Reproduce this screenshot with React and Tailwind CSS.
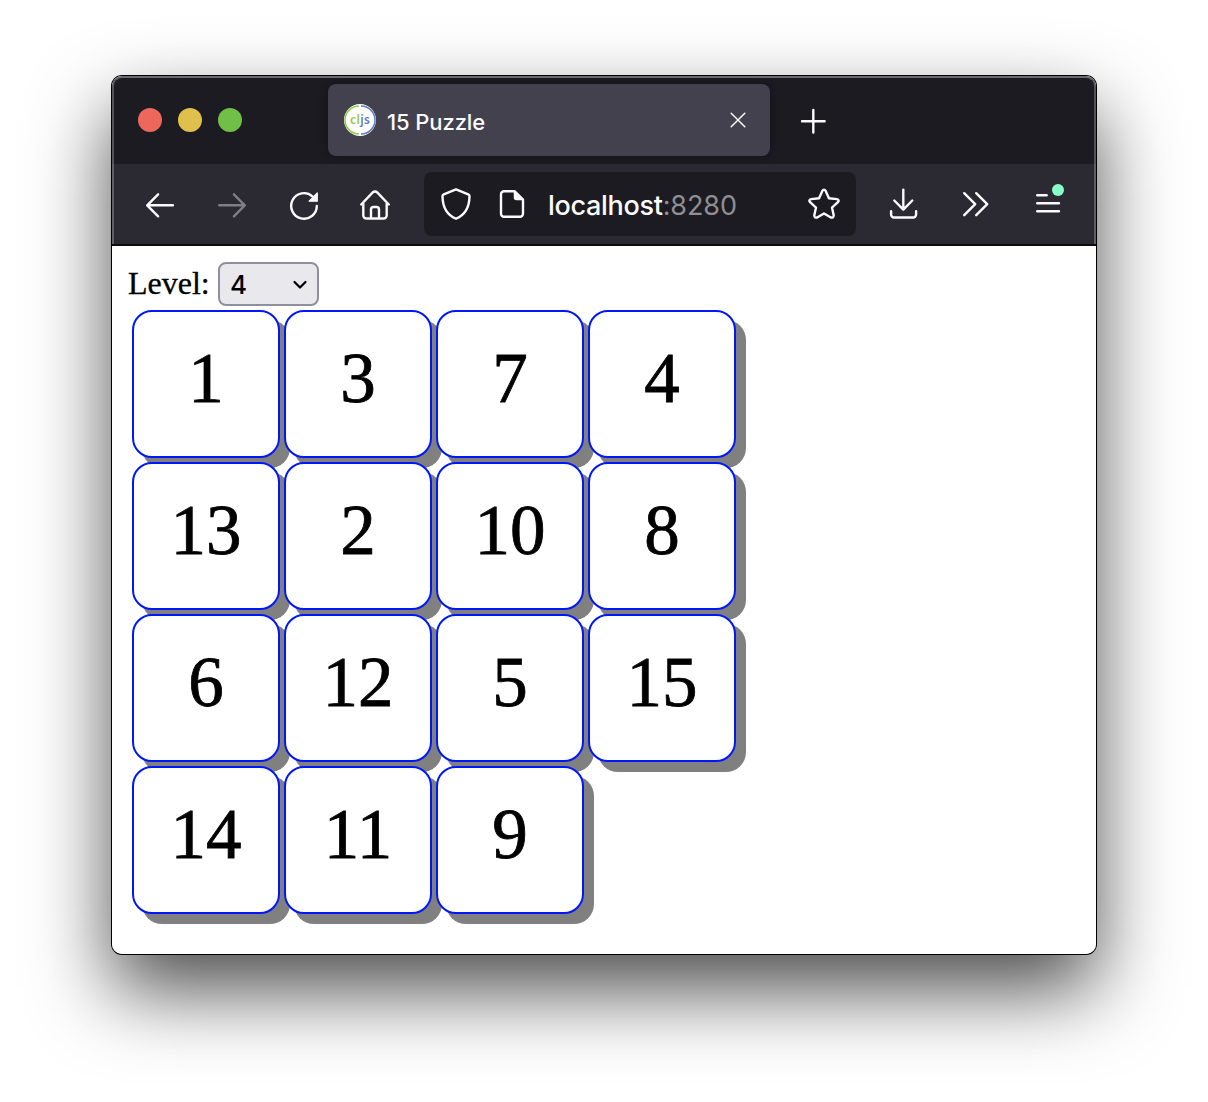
const TILES = [1, 3, 7, 4, 13, 2, 10, 8, 6, 12, 5, 15, 14, 11, 9];

function Icon({ children, className = "text-[#fbfbfe]" }) {
  return (
    <svg
      viewBox="0 0 32 32"
      fill="none"
      stroke="currentColor"
      strokeWidth="2.4"
      strokeLinecap="round"
      strokeLinejoin="round"
      className={`size-8 shrink-0 ${className}`}
    >
      {children}
    </svg>
  );
}

function Favicon() {
  return (
    <svg viewBox="0 0 32 32" className="size-8 shrink-0">
      <circle cx="16" cy="16" r="16" fill="#fff" />
      <path d="M15 2a14 14 0 0 0 0 28" fill="none" stroke="#96ca4b" strokeWidth="1.5" />
      <path d="M17 2a14 14 0 0 1 0 28" fill="none" stroke="#5f7fbf" strokeWidth="1.5" />
      <text x="6" y="20" fontFamily="'Noto Sans', sans-serif" fontSize="12" fontWeight="600" textLength="20">
        <tspan fill="#96ca4b">cl</tspan>
        <tspan fill="#5f7fbf">js</tspan>
      </text>
    </svg>
  );
}

function TabBar() {
  return (
    <div className="flex h-[88px] items-start bg-[#1c1b22] pt-2">
      <div className="ml-[26px] mt-6 flex w-[190px] gap-4">
        <span className="size-6 rounded-full bg-[#ee675c]" />
        <span className="size-6 rounded-full bg-[#e0c04c]" />
        <span className="size-6 rounded-full bg-[#71bf46]" />
      </div>
      <div className="flex h-[72px] w-[442px] items-center rounded-lg bg-[#42414d] pl-4 pr-4 shadow-[0_0_8px_rgba(0,0,0,0.4)]">
        <Favicon />
        <span className="ml-[11px] mt-1 flex-1 font-['Inter',sans-serif] text-[22px] font-medium leading-7 tracking-[-0.1px] text-[#fbfbfe]">
          15 Puzzle
        </span>
        <Icon>
          <path d="M9.200 9.200l13.600 13.600M22.800 9.200L9.200 22.800" strokeWidth="1.500" />
        </Icon>
      </div>
      <div className="ml-[27px] mt-[21px]">
        <Icon>
          <path d="M16.300 5v22.600M5 16.300h22.600" />
        </Icon>
      </div>
    </div>
  );
}

function UrlBar() {
  return (
    <div className="-mx-2 flex h-16 w-[432px] shrink-0 items-center rounded-lg bg-[#1c1b22] px-4">
      <Icon>
        <path d="M16 1.400L28.200 6.300Q29.600 7 29.500 8.500C29.300 18 26 26.600 16 30.700C6 26.600 2.700 18 2.500 8.500Q2.400 7 3.800 6.300Z" />
      </Icon>
      <Icon className="ml-6 text-[#fbfbfe]">
        <path d="M18.500 3.200H8a3 3 0 0 0-3 3v19.600a3 3 0 0 0 3 3h16a3 3 0 0 0 3-3V11.500Z" />
        <path d="M18.500 3.200v6.300a2 2 0 0 0 2 2H27Z" fill="currentColor" strokeWidth="1.500" />
      </Icon>
      <span className="ml-5 mt-1 flex-1 font-['Inter',sans-serif] text-[27px] leading-8 tracking-[-0.1px] text-[#fbfbfe]">
        <span className="font-medium tracking-[-0.3px]">localhost</span>
        <span className="text-[#8f8e94]">:8280</span>
      </span>
      <Icon>
        <path d="M14.300 2.900Q16 .4 17.700 2.900L20.900 10.200L28.900 11.100Q31.800 11.900 29.900 14.200L24 19.600L25.700 27.300Q25.600 30.300 22.900 29.500L16 25.500L9.100 29.500Q6.400 30.300 6.300 27.300L8 19.600L2.100 14.200Q.2 11.900 3.100 11.100L11.100 10.200Z" />
      </Icon>
    </div>
  );
}

function Toolbar() {
  return (
    <div className="flex h-[82px] items-center gap-10 border-b-2 border-[#0c0c0d] bg-[#2b2a33] pl-8">
      <Icon>
        <path d="M28.900 17.300H3.400M14.100 6.300L3.200 17.300l10.900 11" />
      </Icon>
      <Icon className="text-[#7f7e84]">
        <path d="M3.200 17.300h25.600M17.900 6.300l10.900 11l-10.900 11" />
      </Icon>
      <Icon>
        <path d="M28.800 18a12.800 12.800 0 1 1-4.400-9.700" />
        <path d="M29.300 5v8.200h-8.200Z" fill="currentColor" strokeWidth="1.200" />
      </Icon>
      <Icon className="-ml-px mr-px text-[#fbfbfe]">
        <path d="M2.200 16.500L13.800 4.400a3 3 0 0 1 4.400 0L29.800 16.500M4.300 14.500v13a3 3 0 0 0 3 3h17.400a3 3 0 0 0 3-3v-13M12 30v-8.500a2.500 2.500 0 0 1 2.500-2.500h3a2.500 2.500 0 0 1 2.500 2.500V30" />
      </Icon>
      <UrlBar />
      <Icon>
        <path d="M15.300 1.600v20M6.300 12.500l9 9.200l9-9.200M3.100 23.300v3.200a3 3 0 0 0 3 3h19a3 3 0 0 0 3-3v-3.200" />
      </Icon>
      <Icon>
        <path d="M4.200 5.200l11 11l-11 11M16.200 5.200l11 11l-11 11" />
      </Icon>
      <div className="relative size-8 shrink-0">
        <Icon>
          <path d="M5.200 7.200h9.500M5.200 15.200h21.800M5.200 23.200h21.800" />
        </Icon>
        <span className="absolute -top-1 left-5 size-3 rounded-full bg-[#87ffc4]" />
      </div>
    </div>
  );
}

function Tile({ value }) {
  return (
    <div className="size-[148px] rounded-[20px] border-2 border-[#0018f9] bg-white pt-[26px] text-center text-[71px] leading-[80px] shadow-[10px_10px_0_#808080] [-webkit-text-stroke:0.8px_#000]">
      {value}
    </div>
  );
}

export default function App() {
  return (
    <div className="h-[1102px] w-[1208px] overflow-hidden bg-white pl-[112px] pt-[76px]">
      <div className="relative h-[878px] w-[984px] rounded-[10px] shadow-[0_0_0_1px_#000,0_36px_80px_rgba(0,0,0,0.7)]">
        <div className="h-full overflow-hidden rounded-[10px] bg-white">
          <TabBar />
          <Toolbar />
          <main className="px-4 pt-4 font-['Liberation_Serif',serif] text-black">
            <div className="flex h-11 items-center">
              <span className="-mt-0.5 w-[90px] text-[32px] leading-9 [-webkit-text-stroke:0.3px_#000]">Level:</span>
              <div className="flex h-11 w-[101px] items-center justify-between rounded-lg border-2 border-[#8f8f9d] bg-[#e9e9ed] pl-2.5 pr-[9px] font-['Inter',sans-serif] text-[26px] font-medium leading-8">
                <span className="mt-0.5">4</span>
                <svg viewBox="0 0 16 12" className="h-3 w-4" fill="none" stroke="#000" strokeWidth="2.200" strokeLinecap="round" strokeLinejoin="round">
                  <path d="M2.500 4l5.500 5.500l5.500-5.500" />
                </svg>
              </div>
            </div>
            <div className="ml-1 mt-1 grid w-[604px] grid-cols-4 gap-1">
              {TILES.map((value) => (
                <Tile key={value} value={value} />
              ))}
            </div>
          </main>
        </div>
        <div className="pointer-events-none absolute inset-x-0 top-0 h-[168px] rounded-t-[10px] border-x-2 border-t-2 border-x-white/25 border-t-white/35" />
      </div>
    </div>
  );
}
